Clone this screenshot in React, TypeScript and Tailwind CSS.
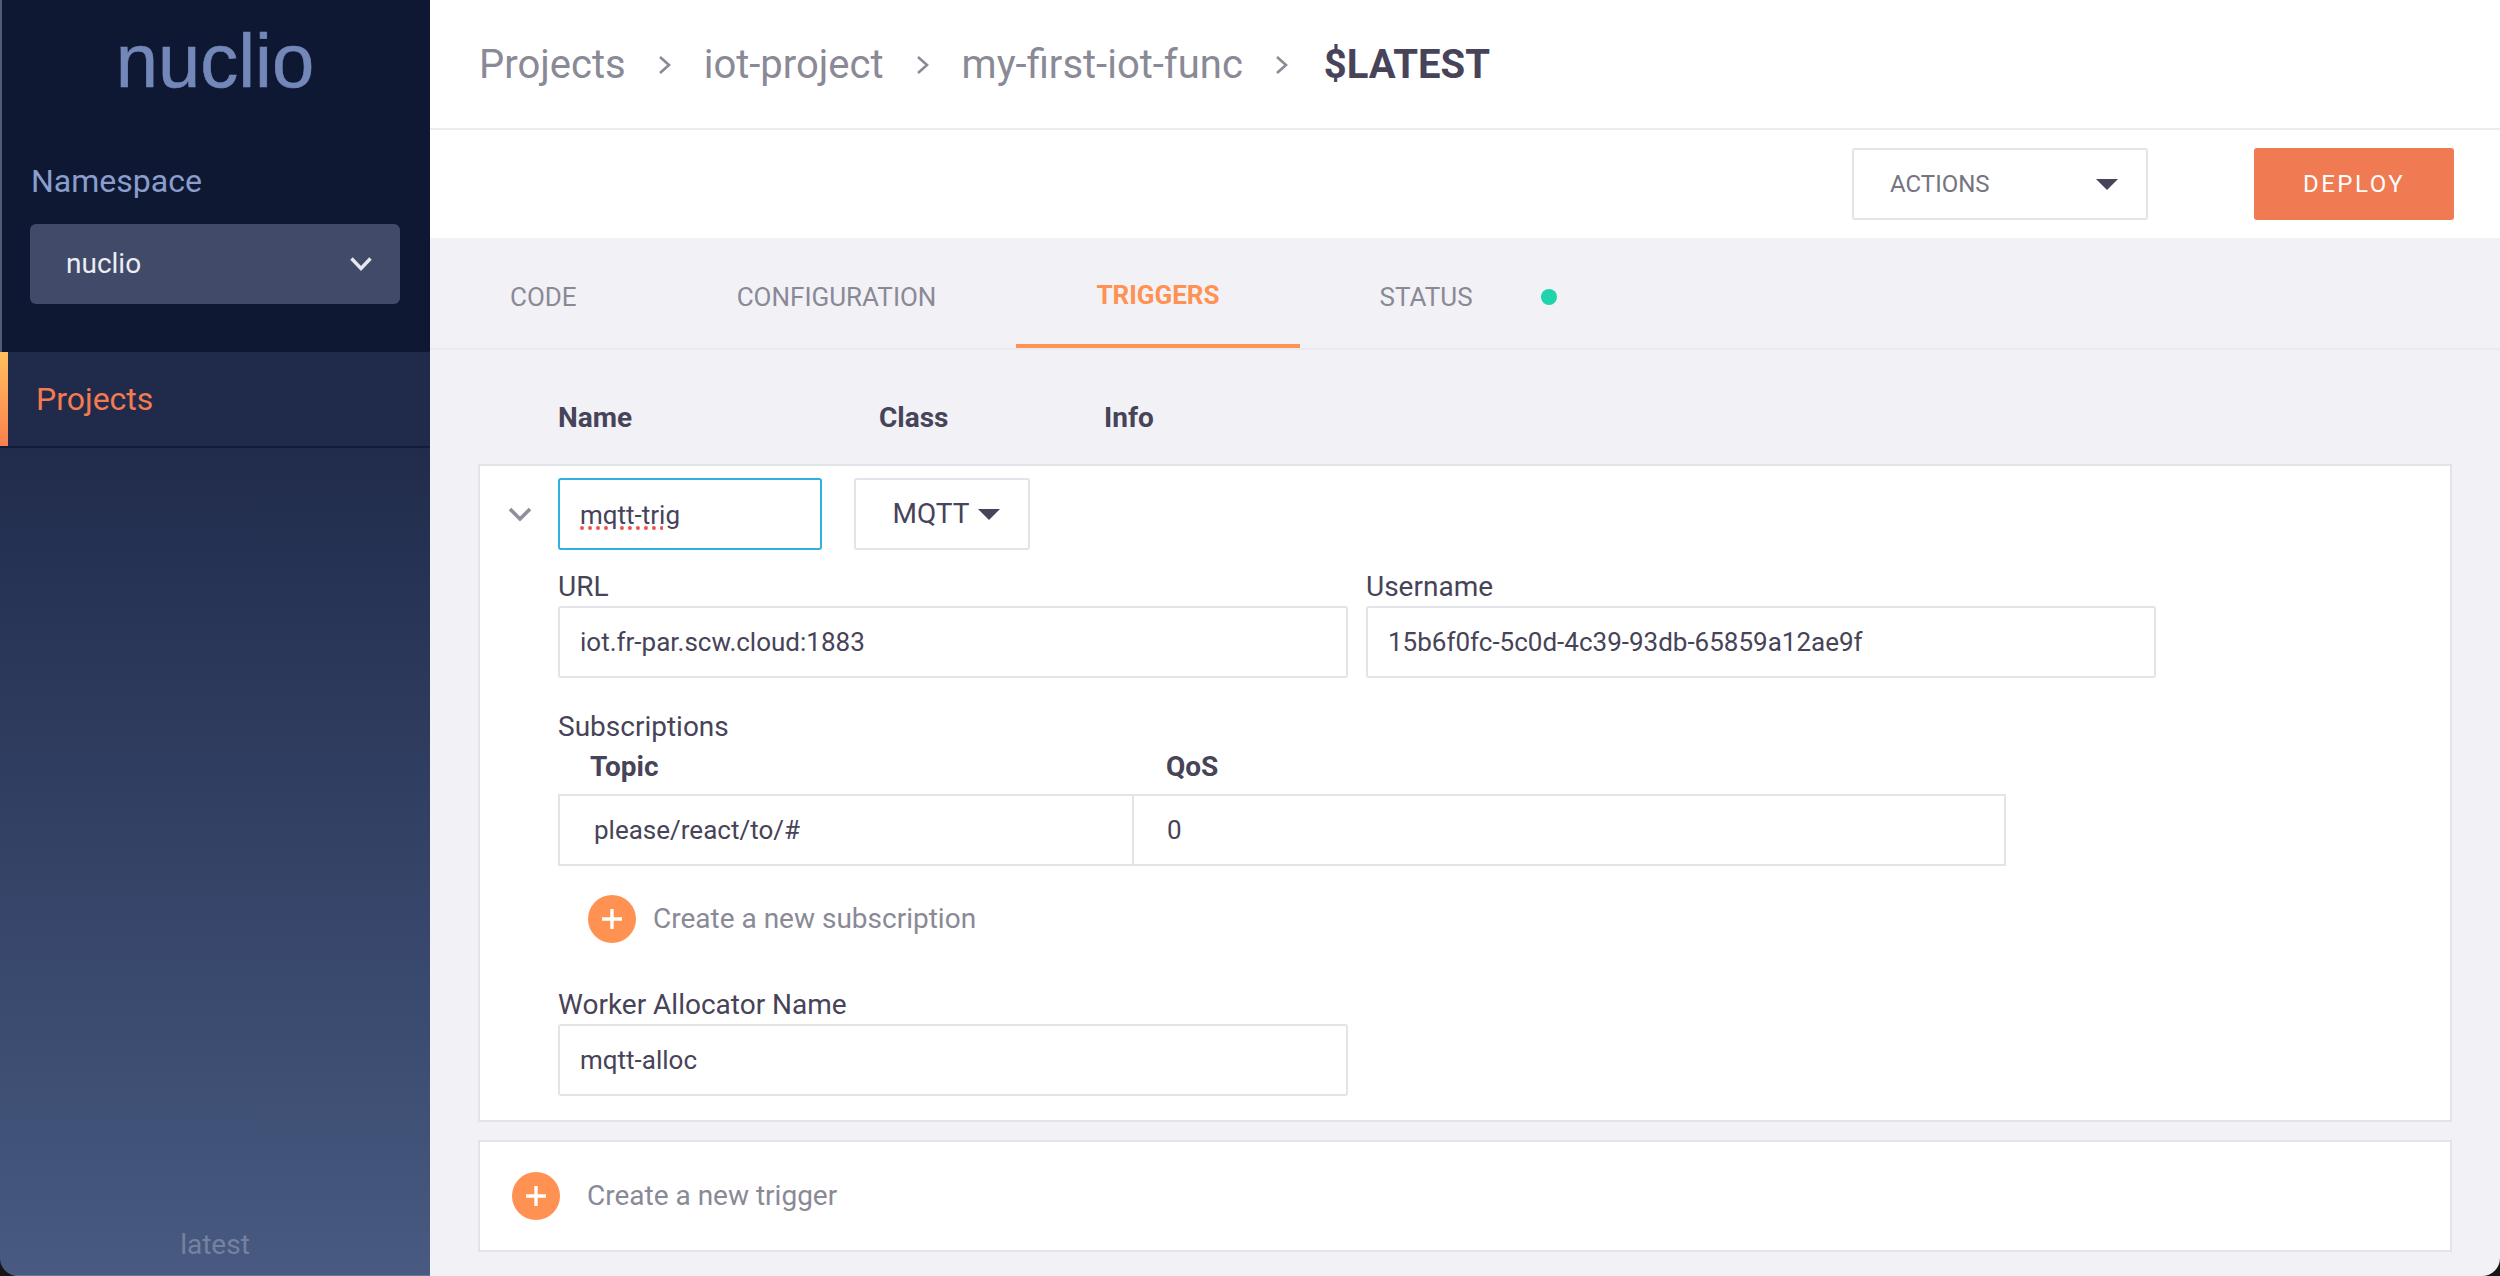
import React from 'react';

const Chevron = () => (
  <svg className="w-[14px] h-[30px] text-[#8a8996]" viewBox="0 0 14 30" fill="none" stroke="currentColor" strokeWidth={2.6}>
    <path d="M2 7l9 8-9 8" />
  </svg>
);

const Caret = ({ className }: { className: string }) => (
  <svg className={className} viewBox="0 0 22 11" fill="currentColor">
    <path d="M0 0h22L11 11z" />
  </svg>
);

const PlusCircle = () => (
  <div className="w-[48px] h-[48px] rounded-full bg-[#ff9153] flex items-center justify-center shrink-0">
    <svg className="w-[20px] h-[20px]" viewBox="0 0 20 20" fill="none" stroke="#fff" strokeWidth={3.4}>
      <path d="M10 0v20M0 10h20" />
    </svg>
  </div>
);

const Field = ({ value, className }: { value: string; className: string }) => (
  <div className={`h-[72px] border-2 border-[#e3e3ea] rounded-[3px] bg-white flex items-center pl-[20px] text-[26px] text-[#474358] ${className}`}>
    {value}
  </div>
);

const Sidebar = () => (
  <aside className="w-[430px] shrink-0 flex flex-col font-['Roboto',sans-serif]">
    <div className="h-[352px] bg-[#0e1833] border-l-2 border-[#565b73] flex flex-col">
      <div className="h-[122px] flex items-center justify-center pr-[2px] font-['Liberation_Sans',sans-serif] text-[76px] leading-none text-[#7388b8] [-webkit-text-stroke:0.6px_#7388b8]">
        nuclio
      </div>
      <div className="mt-[40px] pl-[29px] text-[32px] leading-[38px] text-[#8a9dcc]">Namespace</div>
      <div className="mt-[24px] ml-[28px] w-[370px] h-[80px] rounded-[6px] bg-[#414b69] flex items-center justify-between pl-[36px] pr-[28px] text-[28px] text-[#eceef3]">
        <span>nuclio</span>
        <svg className="w-[22px] h-[14px]" viewBox="0 0 22 14" fill="none" stroke="#e6e8ee" strokeWidth={3.4}>
          <path d="M1.5 1.5L11 11.5l9.5-10" />
        </svg>
      </div>
    </div>
    <div className="h-[96px] bg-[#202a4b] border-b-2 border-[#141c38] flex">
      <div className="w-[8px] h-full bg-gradient-to-b from-[#ffc05c] to-[#fb7f4f]" />
      <div className="pl-[28px] flex items-center text-[32px] text-[#f47b4f]">Projects</div>
    </div>
    <div className="flex-1 bg-gradient-to-b from-[#212c4c] to-[#485a81] border-b border-[#66779c] flex flex-col justify-end items-center pb-[15px]">
      <span className="text-[28px] leading-[30px] text-[#74829f]">latest</span>
    </div>
  </aside>
);

const Main = () => (
  <main className="flex-1 flex flex-col bg-[#f1f1f6] font-['Roboto',sans-serif] text-[#474358]">
    <div className="h-[130px] shrink-0 bg-white border-b-2 border-[#ececf0] pl-[49px] pt-[2px] flex items-center gap-[32px] text-[40px] text-[#8a8996]">
      <span>Projects</span>
      <Chevron />
      <span>iot-project</span>
      <Chevron />
      <span>my-first-iot-func</span>
      <Chevron />
      <span className="ml-[3px] font-bold text-[#474358]">$LATEST</span>
    </div>

    <div className="h-[108px] shrink-0 bg-white pr-[46px] flex items-start justify-end pt-[18px]">
      <div className="w-[296px] h-[72px] border-2 border-[#e3e3ea] rounded-[3px] flex items-center justify-between pl-[36px] pr-[28px] text-[24px] text-[#757480]">
        <span>ACTIONS</span>
        <Caret className="w-[22px] h-[11px] text-[#474358]" />
      </div>
      <div className="ml-[106px] w-[200px] h-[72px] rounded-[3px] bg-[#f07a52] flex items-center justify-center text-[24px] tracking-[2.5px] text-white">
        DEPLOY
      </div>
    </div>

    <div className="h-[112px] shrink-0 border-b-2 border-[#e8eaf0] flex items-stretch text-[26px] text-[#8a8996]">
      <div className="px-[80px] pt-[8px] flex items-center">CODE</div>
      <div className="px-[80px] pt-[8px] flex items-center">CONFIGURATION</div>
      <div className="px-[80px] pt-[8px] flex items-center font-bold text-[#ff9153] border-b-4 border-[#ff9153]">TRIGGERS</div>
      <div className="px-[80px] pt-[8px] flex items-center">STATUS</div>
      <div className="self-center mt-[8px] -ml-[12px] w-[16px] h-[16px] rounded-full bg-[#1fd4aa]" />
    </div>

    <div className="flex-1 px-[48px]">
      <div className="h-[114px] pl-[80px] pb-[31px] flex items-end text-[28px] font-bold leading-[30px]">
        <div className="w-[321px]">Name</div>
        <div className="w-[225px]">Class</div>
        <div>Info</div>
      </div>

      <section className="h-[658px] bg-white border-2 border-[#e3e3ea] flex">
        <div className="w-[78px] shrink-0 pt-[41px] pl-[28px]">
          <svg className="w-[24px] h-[15px]" viewBox="0 0 24 15" fill="none" stroke="#8f8e9c" strokeWidth={3.6}>
            <path d="M2 2l10 10 10-10" />
          </svg>
        </div>
        <div className="flex-1 flex flex-col pt-[12px]">
          <div className="flex gap-[32px]">
            <div className="w-[264px] h-[72px] border-2 border-[#2eb0e0] rounded-[3px] flex items-center pl-[20px] pt-[2px] text-[26px]">
              <span className="underline decoration-dotted decoration-[4px] decoration-[#f64f4f] underline-offset-[3px]">mqtt-trig</span>
            </div>
            <div className="w-[176px] h-[72px] border-2 border-[#e3e3ea] rounded-[3px] flex items-center justify-center gap-[9px] pl-[9px] text-[28px]">
              <span>MQTT</span>
              <Caret className="w-[22px] h-[11px] text-[#474358]" />
            </div>
          </div>

          <div className="flex gap-[18px] mt-[20px]">
            <div className="w-[790px]">
              <div className="text-[28px] leading-[34px] mb-[2px]">URL</div>
              <Field value="iot.fr-par.scw.cloud:1883" className="w-full" />
            </div>
            <div className="w-[790px]">
              <div className="text-[28px] leading-[34px] mb-[2px]">Username</div>
              <Field value="15b6f0fc-5c0d-4c39-93db-65859a12ae9f" className="w-full" />
            </div>
          </div>

          <div className="text-[28px] leading-[34px] mt-[32px]">Subscriptions</div>
          <div className="flex text-[28px] leading-[34px] font-bold mt-[6px] mb-[10px]">
            <div className="w-[608px] pl-[32px]">Topic</div>
            <div>QoS</div>
          </div>
          <div className="w-[1448px] h-[72px] border-2 border-[#e3e3ea] flex text-[26px]">
            <div className="w-[574px] border-r-2 border-[#e3e3ea] flex items-center pl-[34px]">please/react/to/#</div>
            <div className="flex items-center pl-[33px]">0</div>
          </div>

          <div className="flex items-center gap-[17px] mt-[29px] ml-[30px] text-[28px] text-[#8a8996]">
            <PlusCircle />
            <span>Create a new subscription</span>
          </div>

          <div className="text-[28px] leading-[34px] mt-[45px] mb-[2px]">Worker Allocator Name</div>
          <Field value="mqtt-alloc" className="w-[790px]" />
        </div>
      </section>

      <section className="mt-[18px] h-[112px] bg-white border-2 border-[#e3e3ea] flex items-center gap-[27px] pl-[32px] text-[28px] text-[#8a8996]">
        <PlusCircle />
        <span>Create a new trigger</span>
      </section>
    </div>
  </main>
);

export default function App() {
  return (
    <div className="w-[2500px] h-[1276px] bg-[#161616]">
      <div className="w-full h-full flex overflow-hidden rounded-b-[18px]">
        <Sidebar />
        <Main />
      </div>
    </div>
  );
}
